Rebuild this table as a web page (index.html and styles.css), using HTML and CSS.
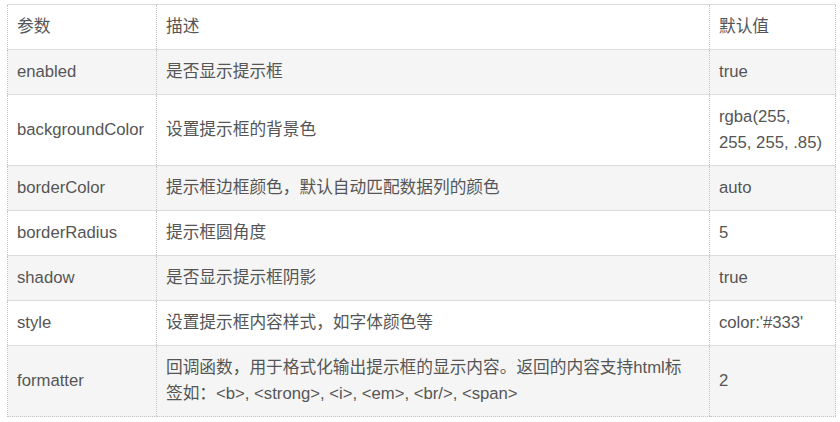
FILE: index.html
```html
<!DOCTYPE html>
<html lang="zh">
<head>
<meta charset="utf-8">
<link rel="stylesheet" href="styles.css">
</head>
<body>
<table class="params">
  <colgroup>
    <col class="c-name">
    <col class="c-desc">
    <col class="c-def">
  </colgroup>
  <tbody>
    <tr><td>参数</td><td>描述</td><td>默认值</td></tr>
    <tr><td>enabled</td><td>是否显示提示框</td><td>true</td></tr>
    <tr><td>backgroundColor</td><td>设置提示框的背景色</td><td>rgba(255, 255, 255, .85)</td></tr>
    <tr><td>borderColor</td><td>提示框边框颜色，默认自动匹配数据列的颜色</td><td>auto</td></tr>
    <tr><td>borderRadius</td><td>提示框圆角度</td><td>5</td></tr>
    <tr><td>shadow</td><td>是否显示提示框阴影</td><td>true</td></tr>
    <tr><td>style</td><td>设置提示框内容样式，如字体颜色等</td><td>color:'#333'</td></tr>
    <tr><td>formatter</td><td>回调函数，用于格式化输出提示框的显示内容。返回的内容支持html标<br>签如：&lt;b&gt;, &lt;strong&gt;, &lt;i&gt;, &lt;em&gt;, &lt;br/&gt;, &lt;span&gt;</td><td>2</td></tr>
  </tbody>
</table>
</body>
</html>
```

FILE: styles.css
```css
html, body {
  margin: 0;
  padding: 0;
  background: #fff;
}

body {
  padding: 4px 0 0 7px;
  font-family: "Liberation Sans", "Noto Sans CJK SC", sans-serif;
  font-size: 16.7px;
  color: #555;
}

.params {
  border-collapse: collapse;
  table-layout: fixed;
  width: 828px;
  border-top: 1px solid #dcdcdc;
  border-left: 1px dotted #c4c4c4;
  border-right: 1px dotted #c4c4c4;
  border-bottom: 1px dotted #c4c4c4;
}

.c-name { width: 149px; }
.c-desc { width: 553px; }
.c-def { width: 126px; }

.params td {
  padding: 9px 10px 9px 9px;
  line-height: 26px;
  vertical-align: middle;
  border-left: 1px dotted #c4c4c4;
  border-bottom: 1px solid #dcdcdc;
  text-align: left;
  word-wrap: break-word;
}

.params tr:last-child td {
  border-bottom: 1px dotted #c4c4c4;
}

.params tr:nth-child(even) td {
  background: #f5f5f5;
}
```
